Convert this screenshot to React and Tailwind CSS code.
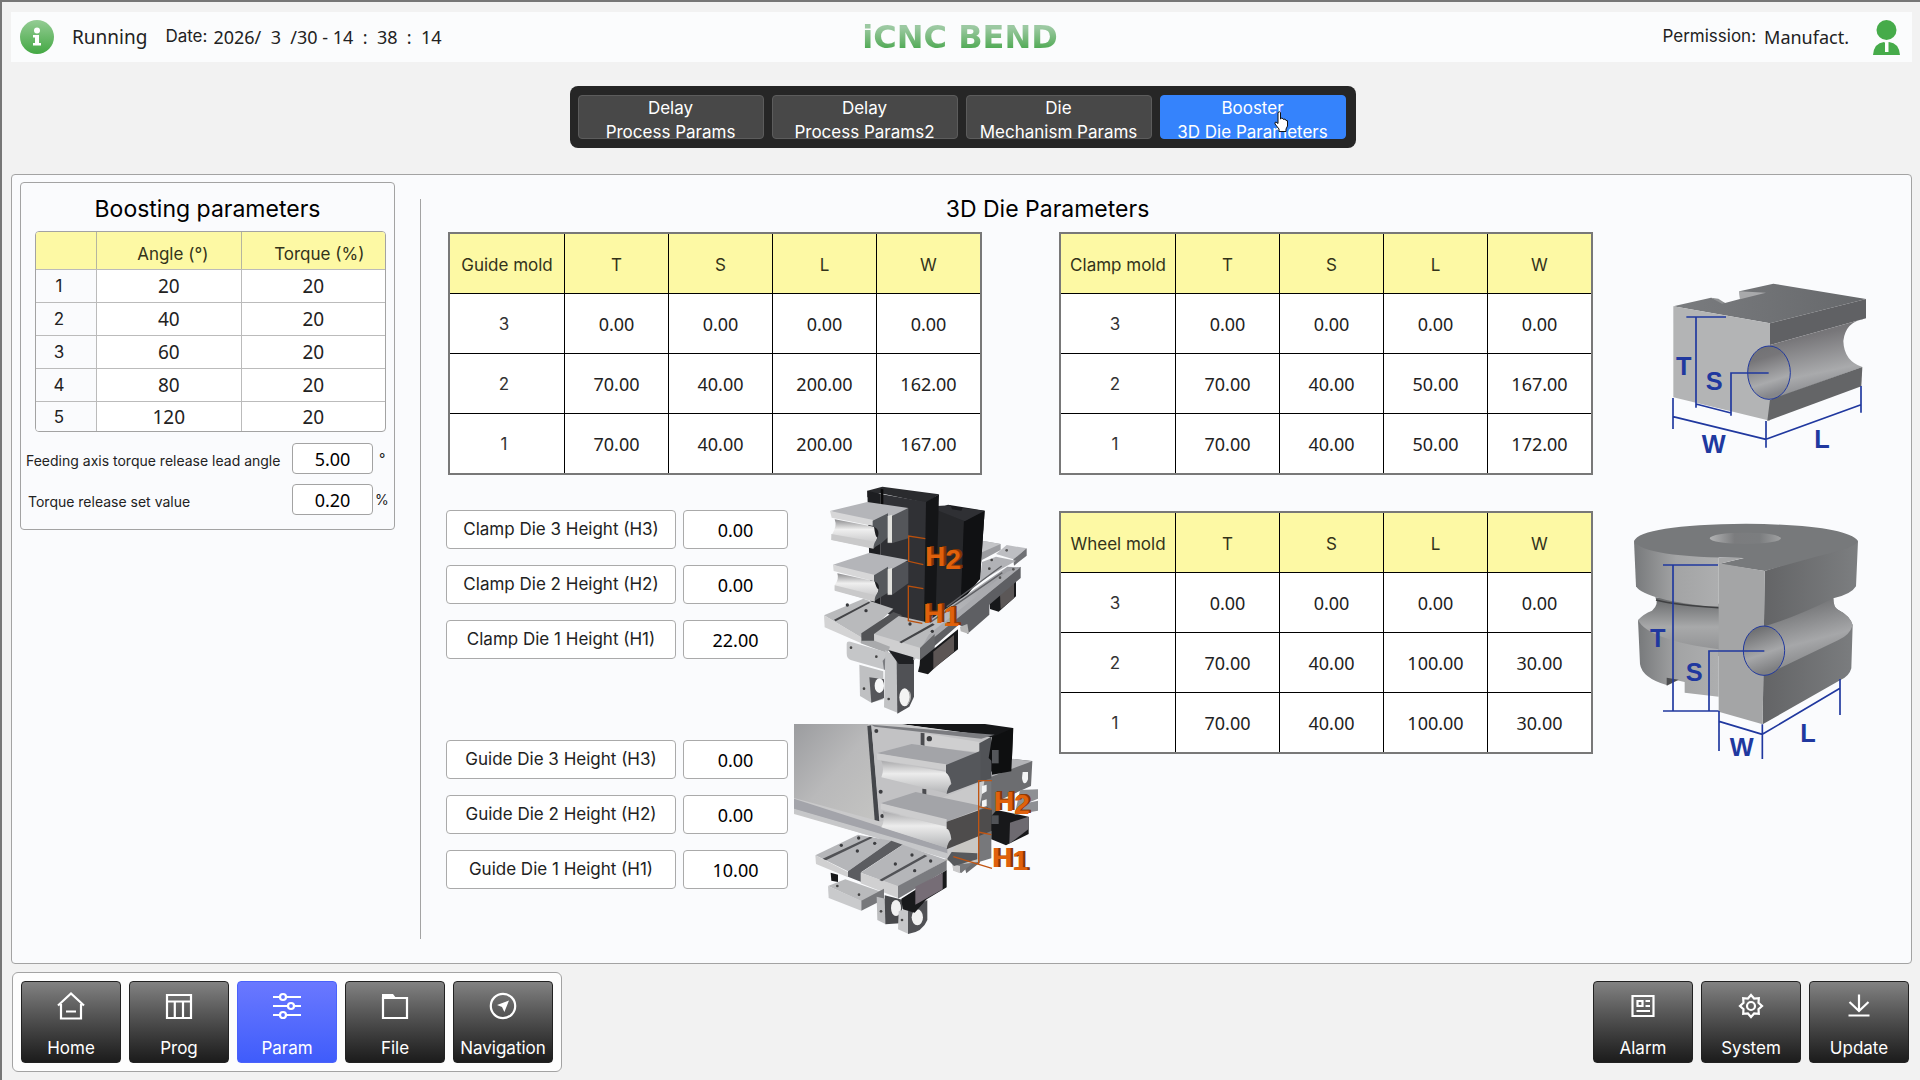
import React from "react";

const tabs = [
  ["Delay", "Process Params"],
  ["Delay", "Process Params2"],
  ["Die", "Mechanism Params"],
  ["Booster", "3D Die Parameters"],
];

const boosting = [
  { id: 1, angle: "20", torque: "20" },
  { id: 2, angle: "40", torque: "20" },
  { id: 3, angle: "60", torque: "20" },
  { id: 4, angle: "80", torque: "20" },
  { id: 5, angle: "120", torque: "20" },
];

const guideMold = [
  ["3", "0.00", "0.00", "0.00", "0.00"],
  ["2", "70.00", "40.00", "200.00", "162.00"],
  ["1", "70.00", "40.00", "200.00", "167.00"],
];

const clampMold = [
  ["3", "0.00", "0.00", "0.00", "0.00"],
  ["2", "70.00", "40.00", "50.00", "167.00"],
  ["1", "70.00", "40.00", "50.00", "172.00"],
];

const wheelMold = [
  ["3", "0.00", "0.00", "0.00", "0.00"],
  ["2", "70.00", "40.00", "100.00", "30.00"],
  ["1", "70.00", "40.00", "100.00", "30.00"],
];

const clampHeights = [
  { id: "clamp-h3", label: "Clamp Die 3 Height (H3)", value: "0.00" },
  { id: "clamp-h2", label: "Clamp Die 2 Height (H2)", value: "0.00" },
  { id: "clamp-h1", label: "Clamp Die 1 Height (H1)", value: "22.00" },
];

const guideHeights = [
  { id: "guide-h3", label: "Guide Die 3 Height (H3)", value: "0.00" },
  { id: "guide-h2", label: "Guide Die 2 Height (H2)", value: "0.00" },
  { id: "guide-h1", label: "Guide Die 1 Height (H1)", value: "10.00" },
];

function Icon({ children }) {
  return (
    <svg viewBox="0 0 28 28" className="w-7 h-7" fill="none" stroke="currentColor" strokeWidth="2.2" aria-hidden="true">
      {children}
    </svg>
  );
}

const HomeIcon = () => (
  <Icon>
    <path d="M1 13.5 14 1.5l13 12M4 12v14.5h20V12M9 19.5h10" />
  </Icon>
);

const ProgIcon = () => (
  <Icon>
    <path d="M2 3h24v23H2zM2 9.5h24M9.8 9.5V26M18 9.5V26" />
  </Icon>
);

const ParamIcon = () => (
  <Icon>
    <path d="M0 5h7M13 5h15M0 14h15M21 14h7M0 23h7M13 23h15" />
    <circle cx="10" cy="5" r="3" />
    <circle cx="18" cy="14" r="3" />
    <circle cx="10" cy="23" r="3" />
  </Icon>
);

const FileIcon = () => (
  <Icon>
    <path d="M2 6h24v20H2z" />
    <path d="M1 6V2h11l3 4z" fill="currentColor" stroke="none" />
  </Icon>
);

const NavigationIcon = () => (
  <Icon>
    <circle cx="14" cy="14" r="12.2" />
    <path d="m20 8.500-4.600 11.500-2.400-5-5-2z" fill="currentColor" stroke="none" />
  </Icon>
);

const AlarmIcon = () => (
  <Icon>
    <path d="M3.500 4h21v20h-21zM8.500 9h5v5h-5zM16.500 9h4.500M16.500 14h4.500M7.500 19h13.500" />
  </Icon>
);

const SystemIcon = () => (
  <Icon>
    <path d="m14 3 3.100 3.500 4.700-.3-.3 4.700L25 14l-3.500 3.100.3 4.700-4.700-.3L14 25l-3.100-3.500-4.700.3.3-4.700L3 14l3.500-3.100-.3-4.700 4.700.3z" />
    <circle cx="14" cy="14" r="4" />
  </Icon>
);

const UpdateIcon = () => (
  <Icon>
    <path d="M14 2.500V18M4.500 10l9.500 9 9.500-9M3.500 23.500h21" />
  </Icon>
);

const leftNav = [
  { label: "Home", icon: HomeIcon },
  { label: "Prog", icon: ProgIcon },
  { label: "Param", icon: ParamIcon, active: true },
  { label: "File", icon: FileIcon },
  { label: "Navigation", icon: NavigationIcon },
];

const rightNav = [
  { label: "Alarm", icon: AlarmIcon },
  { label: "System", icon: SystemIcon },
  { label: "Update", icon: UpdateIcon },
];

function NavButton({ label, icon: NavIcon, active }) {
  return (
    <button
      className={`w-[100px] h-[82px] rounded flex flex-col items-center pt-[10px] text-white border bg-linear-to-b ${
        active ? "from-[#6a78ff] to-[#3f5cfb] border-[#4a62fb]" : "from-[#828282] to-[#1c1c1c] border-[#222]"
      }`}
    >
      <NavIcon />
      <span className="mt-4 text-[17px] leading-6">{label}</span>
    </button>
  );
}

function MoldTable({ name, rows }) {
  return (
    <div className="w-[534px] border-2 border-[#787878] bg-white">
      <table className="w-full table-fixed border-separate border-spacing-0 text-center">
        <thead>
          <tr className="h-[59px] bg-[#fdf9a4] text-[17px] text-[#33331a]">
            <th className="w-[114px] font-normal whitespace-nowrap pt-1">{name}</th>
            {["T", "S", "L", "W"].map((h) => (
              <th key={h} className="font-normal border-l border-black pt-1">{h}</th>
            ))}
          </tr>
        </thead>
        <tbody>
          {rows.map((row) => (
            <tr key={row[0]} className="h-[60px]">
              {row.map((cell, i) => (
                <td
                  key={i}
                  className={
                    i === 0
                      ? "border-t border-black text-[17px] text-[#333] pr-1.5 pt-0.5"
                      : "border-t border-l border-black font-['Noto_Sans',sans-serif] text-lg text-[#222]"
                  }
                >
                  {cell}
                </td>
              ))}
            </tr>
          ))}
        </tbody>
      </table>
    </div>
  );
}

function HeightFields({ items }) {
  return (
    <div className="flex flex-col gap-4">
      {items.map((f) => (
        <div key={f.id} className="flex gap-[7px]">
          <label
            htmlFor={f.id}
            className="w-[230px] h-[39px] flex items-center justify-center border border-[#aaa] rounded-sm bg-white text-[17px]"
          >
            {f.label}
          </label>
          <input
            id={f.id}
            defaultValue={f.value}
            className="w-[105px] h-[39px] border border-[#aaa] rounded-sm bg-white text-center text-black text-lg font-['Noto_Sans',sans-serif]"
          />
        </div>
      ))}
    </div>
  );
}

// lettering with darker copies behind it, for a raised look; the digit sits lower than the H
function RaisedText({ x, y, digit }) {
  const layers = [
    { shift: 8, fill: "#7d3403" },
    { shift: 4, fill: "#8f3d05" },
    { shift: 0, fill: "#e0610c" },
  ];
  return (
    <g fontFamily="Liberation Sans, sans-serif" fontWeight="700" fontSize="84">
      {layers.map((l) => (
        <text key={l.shift} x={x + l.shift} y={y - l.shift / 4} fill={l.fill}>
          H<tspan y={y + 9 - l.shift / 4}>{digit}</tspan>
        </text>
      ))}
    </g>
  );
}

function ClampAssembly() {
  return (
    <svg viewBox="126 48 624 690" className="w-[208px] h-[230px]" role="img" aria-label="Clamp die heights">
      <defs>
        <linearGradient id="caRail" x1="0" y1="1" x2="1" y2="0">
          <stop offset="0" stopColor="#c6c7c9" />
          <stop offset="1" stopColor="#9a9ba0" />
        </linearGradient>
        <linearGradient id="caGroove" x1="0" y1="0" x2="0" y2="1">
          <stop offset="0" stopColor="#8d8d8f" />
          <stop offset=".35" stopColor="#efefef" />
          <stop offset="1" stopColor="#b9b9bb" />
        </linearGradient>
      </defs>

      {/* far rails */}
      <path d="M606 212l56 10v18l-56 30z" fill="#9b9ca0" />
      <path d="M606 212l56 10-56 25z" fill="#c3c4c7" />
      <path d="M648 252l32-27 60 10-40 33z" fill="#bdbec2" />
      <path d="M700 268l40-33v22l-38 30z" fill="#6f7074" />
      <path d="M606 276l42-16 60 12-108 62z" fill="#b1b2b6" />
      <circle cx="635" cy="270" r="4" fill="#444" />
      <circle cx="628" cy="296" r="4" fill="#444" />
      <circle cx="680" cy="241" r="4" fill="#555" />
      <path d="M628 385l80-52v46l-52 46-26-8z" fill="#17181a" />
      <path d="M660 373l42-38v50l-40 33z" fill="#5b5757" />

      {/* dark columns */}
      <path d="M470 118l34-14 110 18-14 205-140 100z" fill="#1b1c1f" />
      <path d="M470 118l82 34-6 246-90 64z" fill="#26272a" />
      <path d="M552 152l62-30-14 205-58 72z" fill="#101113" />
      <path d="M470 108l42-2 4 12 28 4 4-8 66 8-60 32-84-34z" fill="#2f3034" />
      <path d="M262 62l45-12 170 23-38 26-138-29-39 12z" fill="#2a2b2e" />
      <path d="M262 62l40 10v350l-30-5z" fill="#1d1e21" />
      <path d="M302 72l136 24v362l-102-20-34-18z" fill="#303135" />
      <path d="M438 96l39-23-10 355-35 30z" fill="#141517" />
      <path d="M302 56l8 2v50l-8-4z" fill="#0a0a0b" />

      {/* upper jaw */}
      <path d="M325 115h60v90l-50 15h-12z" fill="#54565a" />
      <path d="M150 123l112-27 123 18-105 51z" fill="#b4b5b9" />
      <path d="M150 123l130 27v18l-125-25z" fill="#d7d7d8" />
      <path d="M164 148l118 22q4 32 10 32l-10 33-128-26 3-18q15-22 7-43z" fill="url(#caGroove)" />
      <path d="M154 192l134 24-8 20-126-26z" fill="#c9c9ca" />
      <path d="M278 152l46-22v72l-20 18-24 14q2-18 10-25 15-30-12-40z" fill="#55585c" />
      <path d="M323 138l13-4v84h-13z" fill="#e2e2de" />

      {/* lower jaw */}
      <path d="M325 275h60v65l-50 36h-12z" fill="#505257" />
      <path d="M159 284l110-36 116 22-103 56z" fill="#b4b5b9" />
      <path d="M159 284l123 30v20l-121-31z" fill="#d7d7d8" />
      <path d="M172 310l112 24q4 20 12 25l-12 36-120-35v-15q14-16 8-35z" fill="url(#caGroove)" />
      <path d="M164 346l122 30-6 18-116-32z" fill="#c9c9ca" />
      <path d="M282 316l42-26v78l-40 24q0-14 10-25 10-26-12-34z" fill="#55585c" />
      <path d="M323 298l13-4v80h-13z" fill="#e2e2de" />

      {/* long rail */}
      <path d="M432 462l250-172 40 2-290 265z" fill="url(#caRail)" />
      <path d="M420 535l302-245v34l-94 80v30l-66 58-10-20-16-8-114 100z" fill="#5e5f63" />
      <path d="M432 505l250-200 38-12-296 240z" fill="#a9aaae" />
      <path d="M540 470l22-8 5 30-25-8z" fill="#b6b6b6" />
      <path d="M362 518l305-210M500 410l165-122" stroke="#5f6064" strokeWidth="4" />
      <circle cx="660" cy="323" r="4" fill="#555" />
      <circle cx="700" cy="298" r="4" fill="#555" />

      {/* cross plates */}
      <path d="M132 436l118-50 90 30-94 88z" fill="#b9babc" />
      <path d="M132 436l112 66v18l-110-48z" fill="#d3d3d4" />
      <path d="M244 490l96-64 26 10-82 60v34l-40-15z" fill="#525356" />
      <path d="M162 449l104-54 5 3-104 56z" fill="#434447" />
      <path d="M282 492l74-54 108 24-40 72-20 36-122-44z" fill="#b9babc" />
      <path d="M282 492l140 42v36l-138-45z" fill="#cfcfd0" />
      <path d="M420 534l44-42v48l-44 31z" fill="#66676a" />
      <path d="M358 516l100-56 6 4-100 56z" fill="#434447" />
      <circle cx="202" cy="405" r="5" fill="#37383b" />
      <circle cx="258" cy="422" r="5" fill="#37383b" />
      <circle cx="390" cy="462" r="5" fill="#37383b" />
      <circle cx="457" cy="484" r="5" fill="#37383b" />

      {/* bracket below */}
      <path d="M244 512l40 0 46 18-8 20-80-30z" fill="#a9aaac" />
      <path d="M200 522q0-10 14-6l110 32q20 6 10 30l-18 22-104-30q-12-5-12-20z" fill="#c5c6c8" />
      <path d="M308 572l24-26v40l-20 14z" fill="#7b7c80" />
      <path d="M238 584l72 20v84l-36 10-34-20z" fill="#bfc0c2" />
      <path d="M268 622l44 6v56l-38 14z" fill="#55565a" />
      <ellipse cx="298" cy="647" rx="14" ry="22" fill="#f6f7f8" />
      <path d="M316 540l40 28v162l-44-18z" fill="#c2c3c5" />
      <path d="M350 570l52 0v110l-14 30-36 21z" fill="#505155" />
      <path d="M325 540l75 22v20h-44z" fill="#1f2023" />
      <ellipse cx="374" cy="682" rx="16" ry="27" fill="#f3f3f3" />
      <path d="M384 660q12 22-4 46 14-10 13-28 0-12-9-18z" fill="#aaa" />
      <path d="M420 570l114-92v60l-64 50-26 25-30-8 5-20z" fill="#18191b" />
      <path d="M460 545l62-50v50l-62 52z" fill="#5c5554" />
      <circle cx="213" cy="533" r="4" fill="#444" />
      <circle cx="289" cy="560" r="4" fill="#444" />
      <circle cx="252" cy="656" r="4" fill="#444" />
      <circle cx="326" cy="687" r="4" fill="#444" />

      <path d="M436 206l-50-8v76l44 10M430 356l-45-8v104l42 8" fill="none" stroke="#b9500d" strokeWidth="4" />
      <RaisedText x={435} y={288} digit="2" />
      <RaisedText x={430} y={458} digit="1" />
    </svg>
  );
}

function GuideAssembly() {
  return (
    <svg viewBox="42 42 738 636" className="w-[246px] h-[212px]" role="img" aria-label="Guide die heights">
      <defs>
        <linearGradient id="gaPanel" x1="0" y1="0" x2="1" y2="1">
          <stop offset="0" stopColor="#9b9c9f" />
          <stop offset=".5" stopColor="#b9b9ba" />
          <stop offset="1" stopColor="#c4c4c2" />
        </linearGradient>
        <linearGradient id="gaRoll" x1="0" y1="0" x2="0" y2="1">
          <stop offset="0" stopColor="#a9a9ab" />
          <stop offset=".4" stopColor="#ececec" />
          <stop offset="1" stopColor="#b3b4b6" />
        </linearGradient>
      </defs>

      {/* rear body */}
      <path d="M360 42h255l84 12-4 122-60 20-20-120z" fill="#151618" />
      <path d="M632 185l70-38 55 6-4 75-88 40-66 190-40 32-14-50 50-220z" fill="#6c6d70" />
      <path d="M632 188l66-42 58 8-122 46z" fill="#b3b4b7" />
      <path d="M596 200l38 10v235l-60 18-30 26-24-8v-60l75-75z" fill="#77787b" />
      <path d="M516 462l24 6v22l-20-8z" fill="#c9c9ca" />
      <path d="M520 412l74-48v92l-40 5-60-10z" fill="#c9c7c3" />
      <path d="M500 425l92 5v18l-70 20-20-20z" fill="#57595c" />

      {/* tilted panel */}
      <path d="M42 42h320l275 40-40 220-94 142-461-132z" fill="#c9c9ca" />
      <path d="M42 42h222l28 290-250-68z" fill="url(#gaPanel)" />
      <path d="M262 48l12-2 24 288-14-4z" fill="#44464a" />
      <path d="M274 46l360 40-36 14v120l-298 116z" fill="#c2c2c4" />
      <path d="M42 266l460 148v18L42 298z" fill="#a3a4aa" />
      <path d="M42 296l460 134v18L42 308z" fill="#c6c7c9" />
      <path d="M274 44l370 30-40 12-320-36z" fill="#7b7c80" />
      <path d="M422 68l12 2v38l-12-4zM427 236l12 2v22l-12-4z" fill="#4b4c50" />
      <path d="M434 70l164 26v30l-164-16z" fill="#cfcfd0" />
      <circle cx="448" cy="86" r="8" fill="#3c3d40" />
      <circle cx="289" cy="63" r="6" fill="#3c3d40" />
      <circle cx="302" cy="245" r="6" fill="#3c3d40" />
      <circle cx="307" cy="318" r="6" fill="#3c3d40" />

      {/* upper die */}
      <path d="M598 100l36-20v125l-36 12z" fill="#515357" />
      <path d="M290 130l105-28 204 28-99 38z" fill="#a3a4a8" />
      <path d="M290 130l208 33v18l-206-32z" fill="#cdcdce" />
      <path d="M304 152l196 34q8 12 12 32l-12 32-196-48q10-24 0-50z" fill="url(#gaRoll)" />
      <path d="M498 165l104-43v92l-102 38q2-20 14-30-4-26-16-34z" fill="#55575b" />

      {/* lower die */}
      <path d="M302 280l105-34 210 44-117 45z" fill="#a3a4a8" />
      <path d="M302 280l198 48v22l-198-52z" fill="#cdcdce" />
      <path d="M308 304l192 46q8 12 14 34l-14 30-196-62q12-20 4-48z" fill="url(#gaRoll)" />
      <path d="M500 335l122-43 14 8v62l-136 56q2-20 14-30-4-32-14-32z" fill="#4e4c4c" />

      {/* right hand blocks */}
      <path d="M636 82l64-28-6 130-58 10v-40l-10-10z" fill="#0e0f10" />
      <path d="M636 120h20v40h-20z" fill="#54565a" />
      <path d="M650 300l96 20v52l-68 34-44-18v-70z" fill="#17181a" />
      <path d="M690 338l55-18v38l-57 43z" fill="#6d6a70" />
      <path d="M634 316h22v26h-22z" fill="#515357" />
      <path d="M720 240l54-2v28l-30 12 30-6v30l-70 12z" fill="#8e9094" />
      <path d="M728 186h16v22q-4 12-10 12t-8-16z" fill="#f3f4f5" />
      <path d="M606 228l14-4v20l-14 8zM606 272l14-4v20l-14 4z" fill="#f3f4f5" />

      {/* base plates */}
      <path d="M106 436l128-62 100 18-130 92z" fill="#b5b6b9" />
      <path d="M106 436l98 50v16l-96-40z" fill="#d0d0d1" />
      <path d="M204 484l130-92 34 12-124 82v30l-40-16z" fill="#5b5c60" />
      <path d="M128 446l142-66 8 3-140 68z" fill="#515256" />
      <path d="M242 488l126-84 132 46-146 80z" fill="#b5b6b9" />
      <path d="M242 488l112 40v36l-112-44z" fill="#d0d0d1" />
      <path d="M354 528l146-78v30l-146 86z" fill="#7a7b7f" />
      <path d="M298 510l136-76 8 4-136 76z" fill="#515256" />
      <g fill="#3c3d40">
        <circle cx="184" cy="406" r="5" />
        <circle cx="236" cy="384" r="5" />
        <circle cx="232" cy="423" r="5" />
        <circle cx="284" cy="400" r="5" />
        <circle cx="346" cy="462" r="5" />
        <circle cx="396" cy="435" r="5" />
        <circle cx="404" cy="482" r="5" />
        <circle cx="452" cy="453" r="5" />
      </g>
      <path d="M152 488l22 6v22l-20-4z" fill="#17181a" />
      <path d="M144 528l52-20 116 40-68 26z" fill="#b9babc" />
      <path d="M144 528l100 44v30l-98-38z" fill="#c9cacc" />
      <path d="M244 572l68-36v32l-68 34z" fill="#77787b" />
      <circle cx="172" cy="528" r="4" fill="#444" />
      <circle cx="237" cy="554" r="4" fill="#444" />

      {/* hinge */}
      <path d="M290 560l26 6v76l-24-12z" fill="#bcbdbf" />
      <path d="M314 556l56 14-10 70-44 3z" fill="#48494c" />
      <ellipse cx="348" cy="594" rx="15" ry="24" fill="#f1f1f1" />
      <path d="M356 604l30-10v78l-32-14z" fill="#c6c7c9" />
      <path d="M384 604l58-34v60q-14 36-58 42z" fill="#505155" />
      <ellipse cx="412" cy="622" rx="17" ry="24" fill="#f1f1f1" />
      <path d="M364 566l136-86v52l-60 36-36 40-36-10z" fill="#18191b" />
      <path d="M406 530l82-42v50l-82 46z" fill="#766d76" />
      <circle cx="303" cy="604" r="4" fill="#444" />
      <circle cx="366" cy="630" r="4" fill="#444" />

      <path d="M636 212h-40v250M596 290l38 8M594 366l40 8M520 440l116 35" fill="none" stroke="#c05512" strokeWidth="4" />
      <RaisedText x={641} y={302} digit="2" />
      <RaisedText x={636} y={472} digit="1" />
    </svg>
  );
}

function DieBlock() {
  return (
    <svg viewBox="180 66 600 522" className="w-[200px] h-[174px] ml-[38px] overflow-visible" role="img" aria-label="Die dimensions T, S, W, L">
      <defs>
        <linearGradient id="dbBore" x1="0" y1="0" x2=".25" y2="1">
          <stop offset="0" stopColor="#6f7073" />
          <stop offset=".3" stopColor="#777679" />
          <stop offset=".75" stopColor="#a9aaac" />
          <stop offset="1" stopColor="#85868a" />
        </linearGradient>
        <linearGradient id="dbTop" x1="0" y1="0" x2="1" y2="0">
          <stop offset="0" stopColor="#7a7c7f" />
          <stop offset="1" stopColor="#66686b" />
        </linearGradient>
      </defs>
      <path d="M190 139l113-26 42 16 45-12-2-23 102-23 278 46-288 73z" fill="url(#dbTop)" />
      <path d="M388 94l80 4-78 20z" fill="#a8a9ab" />
      <path d="M303 113l22 3 20 13-9 2z" fill="#8e9092" />
      <path d="M190 139l290 51v292l-290-70z" fill="#b3b4b5" />
      <path d="M480 190l288-73v58l-288 80z" fill="#606164" />
      <path d="M480 255l288-80q-62 10-68 68 2 60 57 78l-270 98z" fill="url(#dbBore)" />
      <path d="M480 419l277-98-3 58-282 104z" fill="#646567" />
      <ellipse cx="477" cy="338" rx="64" ry="80" fill="url(#dbBore)" />
      <g fill="none" stroke="#20389f" strokeWidth="5">
        <ellipse cx="477" cy="338" rx="64" ry="80" strokeWidth="3" />
        <path d="M229 171h119M258 171v272M476 339H363v128M258 432l105 27M189 414v93M189 470l279 68M468 483v80M468 538l285-104M753 378v80" />
      </g>
      <g fill="#20389f" fontFamily="Liberation Sans, sans-serif" fontWeight="700" fontSize="76">
        <text x="198" y="345">T</text>
        <text x="287" y="389">S</text>
        <text x="275" y="578">W</text>
        <text x="613" y="564">L</text>
      </g>
    </svg>
  );
}

function DieWheel() {
  return (
    <svg viewBox="66 72 690 711" className="w-[230px] h-[237px] mt-[67px] overflow-visible" role="img" aria-label="Wheel dimensions T, S, W, L">
      <defs>
        <linearGradient id="dwSide" x1="0" y1="0" x2="1" y2="0">
          <stop offset="0" stopColor="#77797b" />
          <stop offset=".5" stopColor="#a3a4a5" />
          <stop offset="1" stopColor="#adaeaf" />
        </linearGradient>
        <linearGradient id="dwRight" x1="0" y1="0" x2="1" y2="0">
          <stop offset="0" stopColor="#636466" />
          <stop offset="1" stopColor="#7c7e80" />
        </linearGradient>
        <linearGradient id="dwGroove" x1="0" y1="0" x2="0" y2="1">
          <stop offset="0" stopColor="#66686a" />
          <stop offset=".5" stopColor="#a8a9aa" />
          <stop offset="1" stopColor="#8c8d8f" />
        </linearGradient>
        <linearGradient id="dwBore" x1="0" y1="0" x2=".3" y2="1">
          <stop offset="0" stopColor="#5f6062" />
          <stop offset=".65" stopColor="#a6a7a9" />
          <stop offset="1" stopColor="#7f8082" />
        </linearGradient>
        <linearGradient id="dwHole" x1="0" y1="0" x2="1" y2="0">
          <stop offset="0" stopColor="#b2b3b4" />
          <stop offset=".35" stopColor="#7b7c7e" />
          <stop offset=".7" stopColor="#7b7d7f" />
          <stop offset="1" stopColor="#a0a1a2" />
        </linearGradient>
      </defs>
      {/* waist and lower flange */}
      <path d="M136 295q12 22-10 40-26 10-42 28l10 50 240 60V315z" fill="url(#dwGroove)" />
      <path d="M84 363q30 60 242 88v142l-102-12v-32l-38-8-14 18q-76-22-82-64z" fill="url(#dwSide)" />
      <path d="M170 536l36 6-36 18z" fill="#4c4d4f" />
      {/* upper flange */}
      <path d="M72 126l6 136q26 42 248 64V170z" fill="url(#dwSide)" />
      <path d="M138 303q60 16 188 23" fill="none" stroke="#3f4042" strokeWidth="5" />
      {/* right side */}
      <path d="M464 216l280-90-6 136q-14 24-68 36 0 28 14 34 36 18 44 46l-4 130q-6 24-34 36L458 676z" fill="url(#dwRight)" />
      <path d="M464 382q100-30 206-84 0 28 14 34 36 18 44 46-8 30-44 46l-218 104z" fill="url(#dwBore)" />
      <path d="M72 126q20-48 336-52 300 4 336 52-6 20-120 46l-160 44-138-21 76-18q-304-2-330-51z" fill="#77797b" />
      <path d="M326 195l74-18-74-1z" fill="#a6a7a8" />
      <path d="M326 193l138 23-6 460-132-38z" fill="#a4a5a6" />
      <ellipse cx="406" cy="118" rx="107" ry="17" fill="url(#dwHole)" />
      <ellipse cx="462" cy="455" rx="62" ry="74" fill="url(#dwBore)" />
      <g fill="none" stroke="#20389f" strokeWidth="5">
        <ellipse cx="462" cy="455" rx="62" ry="74" strokeWidth="3" />
        <path d="M159 198h165M189 198v438M159 636h167M463 456H297v180M327 636v120M327 667l130 39M457 676v104M457 706l233-138M690 540v108" />
      </g>
      <g fill="#20389f" fontFamily="Liberation Sans, sans-serif" fontWeight="700" fontSize="76">
        <text x="120" y="444">T</text>
        <text x="227" y="545">S</text>
        <text x="359" y="770">W</text>
        <text x="571" y="729">L</text>
      </g>
    </svg>
  );
}

export default function App() {
  return (
    <div className="min-h-screen bg-[#f2f2f2] border-t-2 border-l-2 border-[#777] pl-[9px] pr-2 pb-2 pt-[10px] flex flex-col font-[Inter,sans-serif] text-[#222]">

      {/* Status bar */}
      <header className="h-[50px] bg-[#fbfcfd] grid grid-cols-[1fr_auto_1fr] items-center pl-[9px] pr-3">
        <div className="flex items-center">
          <svg viewBox="0 0 34 34" className="w-[34px] h-[34px]" role="img" aria-label="Info">
            <defs>
              <linearGradient id="info" x1="0" y1="0" x2="0" y2="1">
                <stop offset="0" stopColor="#94cc94" />
                <stop offset="1" stopColor="#43a843" />
              </linearGradient>
            </defs>
            <circle cx="17" cy="17" r="17" fill="url(#info)" />
            <circle cx="17" cy="10.500" r="3" fill="#fff" />
            <path d="M13 15h6v8h2v2.500h-8V23h2v-5.500h-2z" fill="#fff" />
          </svg>
          <span className="ml-[18px] text-[19px] font-['Noto_Sans',sans-serif]">Running</span>
          <span className="ml-[18px] text-[17px]">Date:</span>
          <span className="ml-1.5 text-lg whitespace-pre font-['Noto_Sans',sans-serif]">2026/  3  /30 - 14  :  38  :  14</span>
        </div>
        <h1 className="font-['DejaVu_Sans',sans-serif] font-bold text-[32px] bg-linear-to-b from-[#9cc9a2] from-30% to-[#43a649] to-80% bg-clip-text text-transparent">
          iCNC BEND
        </h1>
        <div className="flex items-center justify-end">
          <span className="text-[17px]">Permission:</span>
          <span className="ml-2 text-lg font-['Noto_Sans',sans-serif]">Manufact.</span>
          <svg viewBox="0 0 27 35" className="ml-6 w-[27px] h-[35px]" fill="#46ab4a" role="img" aria-label="User">
            <circle cx="13.500" cy="10" r="10" />
            <path d="M0 35q1-12 11-13l2.500 2 2.500-2q10 1 11 13z" />
            <path d="M12 22.500h3.500V32H12z" fill="#fff" />
          </svg>
        </div>
      </header>

      {/* Tabs */}
      <nav className="mt-6 mb-[26px] ml-0.5 self-center bg-[#262626] rounded-lg h-[62px] pl-2 pr-[10px] pt-[9px] flex gap-2">
        {tabs.map(([top, bottom], i) => (
          <button
            key={bottom}
            className={`relative w-[186px] h-11 rounded text-[17px] leading-6 text-white border ${
              i === 3 ? "bg-[#3583fc] border-[#3583fc]" : "bg-[#484848] border-[#5c5c5c]"
            }`}
          >
            <span className="block">{top}</span>
            <span className="block">{bottom}</span>
            {i === 3 && (
              <svg viewBox="0 0 14 21" className="absolute left-[113px] top-[15px] w-[14px] h-[21px]" aria-hidden="true">
                <path
                  d="M4 1.500q1.500-1.500 2.500 0V8l1-.8 1.500.3.500 1 1.500-.5 1 1.500 1.500.2V15l-1.500 3v2.500H5V18l-4-5q-.5-2 1-2l2 1.500z"
                  fill="#fff"
                  stroke="#111"
                  strokeWidth="1"
                />
              </svg>
            )}
          </button>
        ))}
      </nav>

      <main className="flex-1 flex bg-[#fafbfd] border border-[#a3a3a3] rounded-sm pl-2">

        {/* Boosting parameters */}
        <section className="mt-[7px] self-start w-[375px] h-[348px] border border-[#a3a3a3] rounded pt-[10px]">
          <h2 className="text-center text-[23px] leading-8 text-black">Boosting parameters</h2>
          <div className="mt-1.5 ml-[14px] w-[351px] border border-[#a3a3a3] rounded overflow-hidden bg-white">
            <table className="w-full table-fixed border-separate border-spacing-0 text-center">
              <thead>
                <tr className="h-[37px] bg-[#fdf9a4] text-[17px] text-[#33331a]">
                  <th className="w-[60px]" aria-label="No."></th>
                  <th className="border-l border-[#b5b5a0] font-normal pl-2 pt-2">Angle (°)</th>
                  <th className="border-l border-[#b5b5a0] font-normal pl-3 pt-2">Torque (%)</th>
                </tr>
              </thead>
              <tbody>
                {boosting.map((row) => (
                  <tr key={row.id} className="h-[33px] last:h-[30px]">
                    <td className="border-t border-[#bbb] bg-[#fafbfd] pr-3.5 text-[17px] leading-7">{row.id}</td>
                    <td className="border-t border-l border-[#bbb] font-['Noto_Sans',sans-serif] text-[19px] leading-7">{row.angle}</td>
                    <td className="border-t border-l border-[#bbb] font-['Noto_Sans',sans-serif] text-[19px] leading-7">{row.torque}</td>
                  </tr>
                ))}
              </tbody>
            </table>
          </div>

          <div className="mt-[11px] flex items-center">
            <label htmlFor="lead-angle" className="w-[271px] pl-[5px] pt-1 text-sm whitespace-nowrap">
              Feeding axis torque release lead angle
            </label>
            <input
              id="lead-angle"
              defaultValue="5.00"
              className="w-[81px] h-[31px] border border-[#a3a3a3] rounded bg-white text-center text-lg text-black font-['Noto_Sans',sans-serif]"
            />
            <span className="ml-1.5 text-sm">°</span>
          </div>
          <div className="mt-[10px] flex items-center">
            <label htmlFor="set-value" className="w-[271px] pl-[7px] pt-1 text-sm whitespace-nowrap">
              Torque release set value
            </label>
            <input
              id="set-value"
              defaultValue="0.20"
              className="w-[81px] h-[31px] border border-[#a3a3a3] rounded bg-white text-center text-lg text-black font-['Noto_Sans',sans-serif]"
            />
            <span className="ml-0.5 text-sm">%</span>
          </div>
        </section>

        <div className="ml-[25px] my-6 w-px bg-[#a3a3a3]"></div>

        {/* 3D die parameters */}
        <section className="pl-[25px] pt-[18px] flex">
          <div>
            <h2 className="pl-14 text-center text-[23px] leading-8 text-black">3D Die Parameters</h2>
            <div className="mt-[7px] flex gap-[19px]">
              <div className="w-[594px]">
                <div className="pl-0.5">
                  <MoldTable name="Guide mold" rows={guideMold} />
                </div>
                <div className="mt-[11px] flex">
                  <div className="pt-6 pr-[34px]">
                    <HeightFields items={clampHeights} />
                  </div>
                  <ClampAssembly />
                </div>
                <div className="mt-2 flex">
                  <div className="pt-4 pr-1.5">
                    <HeightFields items={guideHeights} />
                  </div>
                  <GuideAssembly />
                </div>
              </div>

              <div className="flex flex-col gap-9">
                <MoldTable name="Clamp mold" rows={clampMold} />
                <MoldTable name="Wheel mold" rows={wheelMold} />
              </div>
            </div>
          </div>

          <div className="pl-[39px] pt-[89px]">
            <DieBlock />
            <DieWheel />
          </div>
        </section>
      </main>

      {/* Bottom navigation */}
      <footer className="mt-2 flex justify-between items-center">
        <nav className="flex gap-2 p-2 ml-px border border-[#a3a3a3] rounded-md bg-[#fdfdfd]">
          {leftNav.map((item) => (
            <NavButton key={item.label} {...item} />
          ))}
        </nav>
        <nav className="flex gap-2 pr-[3px]">
          {rightNav.map((item) => (
            <NavButton key={item.label} {...item} />
          ))}
        </nav>
      </footer>
    </div>
  );
}
